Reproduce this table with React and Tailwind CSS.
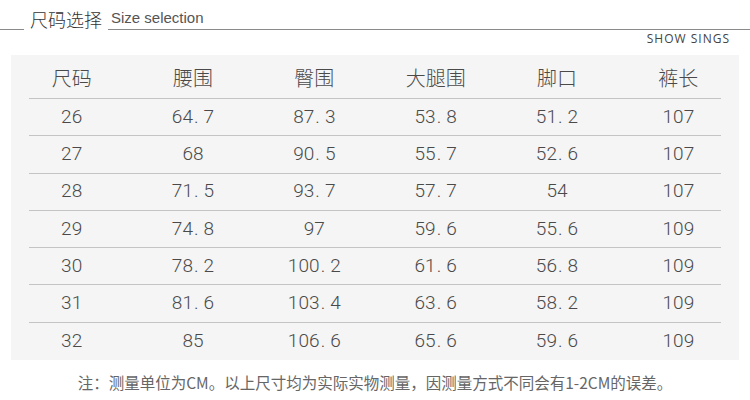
import React from "react";

const headers = ["尺码", "腰围", "臀围", "大腿围", "脚口", "裤长"];
const rows = [
  ["26", "64.7", "87.3", "53.8", "51.2", "107"],
  ["27", "68", "90.5", "55.7", "52.6", "107"],
  ["28", "71.5", "93.7", "57.7", "54", "107"],
  ["29", "74.8", "97", "59.6", "55.6", "109"],
  ["30", "78.2", "100.2", "61.6", "56.8", "109"],
  ["31", "81.6", "103.4", "63.6", "58.2", "109"],
  ["32", "85", "106.6", "65.6", "59.6", "109"],
];

const cjk = { fontFamily: '"Noto Sans CJK SC", sans-serif' };
const num = { fontFamily: 'Roboto, "Noto Sans", sans-serif' };

function Num({ value }) {
  return (
    <span className="inline-flex justify-center">
      {value.split("").map((ch, k) =>
        ch === "." ? (
          <span key={k} className="inline-block w-[10.6px] text-left pl-[1px]">
            {ch}
          </span>
        ) : (
          <span key={k} className="inline-block w-[10.6px] text-center">
            {ch}
          </span>
        )
      )}
    </span>
  );
}

export default function App() {
  return (
    <div className="w-[750px] h-[400px] bg-white overflow-hidden">
      <div className="flex items-end h-[30px]">
        <div className="w-[24px] border-b border-[#8a8a8a]" />
        <div
          className="ml-[6px] mr-[6px] text-[18px] leading-[22px] text-[#333] font-light"
          style={cjk}
        >
          尺码选择
        </div>
        <div className="flex-1 border-b border-[#8a8a8a] pl-[3px]">
          <span
            className="text-[15px] leading-[18px] text-[#555]"
            style={{ fontFamily: '"Liberation Sans", Arial, sans-serif' }}
          >
            Size selection
          </span>
        </div>
      </div>
      <div className="h-[18px] flex items-center justify-end pr-[20px]">
        <span
          className="text-[12px] tracking-[1px] text-[#444]"
          style={{ fontFamily: '"Open Sans", sans-serif' }}
        >
          SHOW SINGS
        </span>
      </div>
      <div className="mt-[7px] mx-[11px] bg-[#f5f5f5] h-[305px] flex flex-col">
        <div className="grid grid-cols-6 h-[43px] items-center">
          {headers.map((h) => (
            <div
              key={h}
              className="text-center text-[20px] font-light text-[#4a4a4a] pt-[2px]"
              style={cjk}
            >
              {h}
            </div>
          ))}
        </div>
        {rows.map((r, i) => (
          <React.Fragment key={i}>
            <div className="mx-[18px] h-px bg-[#c4c4c4]" />
            <div className="grid grid-cols-6 h-[36.3px] items-center">
              {r.map((c, j) => (
                <div
                  key={j}
                  className="text-center text-[19px] font-light text-[#4a4a4a]"
                  style={num}
                >
                  <Num value={c} />
                </div>
              ))}
            </div>
          </React.Fragment>
        ))}
      </div>
      <div
        className="mt-[11px] text-center text-[15.5px] text-[#666]"
        style={cjk}
      >
        注：测量单位为CM。以上尺寸均为实际实物测量，因测量方式不同会有1-2CM的误差。
      </div>
    </div>
  );
}
